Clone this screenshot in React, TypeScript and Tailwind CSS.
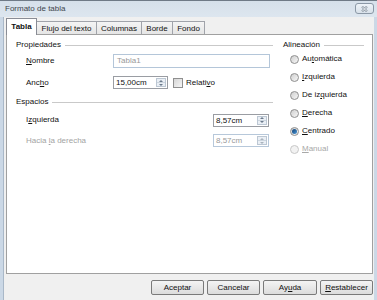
import React from "react";

const U = ({ children }: { children: React.ReactNode }) => (
  <span className="underline decoration-[0.5px] underline-offset-[1px]">{children}</span>
);

function Spin({ value, disabled, width }: { value: string; disabled?: boolean; width: string }) {
  return (
    <div
      className={`flex h-[13px] ${width} border ${
        disabled ? "border-[#b7c8da] text-[#9a9a9a]" : "border-[#9a9da3] text-[#111111]"
      } bg-white`}
    >
      <div className="flex-1 pl-[2px] leading-[11px]">{value}</div>
      <div className="m-[1px] flex w-[10px] flex-col border border-[#bcc7d3] bg-[#eaeff5]">
        <div className="flex flex-1 items-center justify-center border-b border-[#ccd5de]">
          <svg width="4" height="2" viewBox="0 0 4 2">
            <path d="M0 2 L2 0 L4 2 Z" fill={disabled ? "#a9b3bd" : "#6b7a8c"} />
          </svg>
        </div>
        <div className="flex flex-1 items-center justify-center">
          <svg width="4" height="2" viewBox="0 0 4 2">
            <path d="M0 0 L2 2 L4 0 Z" fill={disabled ? "#a9b3bd" : "#6b7a8c"} />
          </svg>
        </div>
      </div>
    </div>
  );
}

function Radio({ label, checked, disabled }: { label: React.ReactNode; checked?: boolean; disabled?: boolean }) {
  return (
    <div className="flex h-[18px] items-center pl-[7px]">
      <div
        className={`flex h-[9px] w-[9px] items-center justify-center rounded-full border ${
          disabled ? "border-[#c8c8c8] bg-[#f2f2f2]" : "border-[#8f8f8f] bg-gradient-to-br from-[#cfcfcf] to-[#f7f7f7]"
        }`}
      >
        {checked && <div className="h-[5px] w-[5px] rounded-full bg-gradient-to-br from-[#0d3f73] to-[#4d9ad9]" />}
      </div>
      <span className={`ml-[3px] ${disabled ? "text-[#a8a8a8]" : "text-[#111111]"}`}>{label}</span>
    </div>
  );
}

function Heading({ title }: { title: string }) {
  return (
    <div className="flex h-[12px] items-center">
      <span className="text-[#111111]">{title}</span>
      <div className="ml-[4px] h-[1px] flex-1 bg-[#c9c9c9]" />
    </div>
  );
}

function Btn({ children, w }: { children: React.ReactNode; w: string }) {
  return (
    <div
      className={`flex h-[15px] ${w} items-center justify-center rounded-[2px] border border-[#7a7a7a] bg-gradient-to-b from-[#f4f4f4] to-[#dcdcdc] text-[#111111]`}
    >
      {children}
    </div>
  );
}

export default function App() {
  const tabs = [
    { t: "Flujo del texto", w: "w-[60px]" },
    { t: "Columnas", w: "w-[45px]" },
    { t: "Borde", w: "w-[31px]" },
    { t: "Fondo", w: "w-[32px]" },
  ];
  return (
    <div
      className="flex h-[300px] w-[377px] flex-col overflow-hidden border-t border-[#6f7a86] bg-[#cbd8e6] text-[8px] leading-none"
      style={{ fontFamily: '"Liberation Sans", Arial, sans-serif' }}
    >
      {/* title bar */}
      <div className="flex h-[16px] items-center bg-gradient-to-b from-[#d6e0ea] to-[#dde6ef] pl-[5px] pr-[3px]">
        <span className="flex-1 text-[#40464c]">Formato de tabla</span>
        <div className="mt-[-1px] flex h-[11px] w-[19px] items-center justify-center rounded-[3px] border border-[#8b98a6] bg-gradient-to-b from-[#eef3f8] to-[#d8e1ea]">
          <svg width="7" height="6" viewBox="0 0 7 6">
            <path d="M1 0.5 L6 5.5 M6 0.5 L1 5.5" stroke="#8a96a3" strokeWidth="2.2" />
            <path d="M1 0.5 L6 5.5 M6 0.5 L1 5.5" stroke="#f7f9fb" strokeWidth="0.9" />
          </svg>
        </div>
      </div>

      {/* client */}
      <div className="mx-[3px] flex flex-1 flex-col border-l border-[#a9b8c8] bg-[#f0f0f0] px-[1px]">
        {/* tabs */}
        <div className="flex h-[18px] items-end pl-[1px]">
          <div className="relative z-10 flex h-[17px] w-[31px] items-start justify-center border-x border-t border-[#898c95] bg-white pt-[4px] font-bold text-[#111111]">
            Tabla
          </div>
          {tabs.map((x) => (
            <div
              key={x.t}
              className={`flex h-[14px] ${x.w} items-start justify-center border-r border-t border-[#a0a3aa] bg-gradient-to-b from-[#f4f4f4] to-[#e4e4e4] pt-[3px] text-[#111111]`}
            >
              {x.t}
            </div>
          ))}
        </div>

        {/* panel */}
        <div className="ml-[1px] mt-[-1px] flex h-[240px] border border-[#a0a0a0] bg-white pl-[9px] pt-[4px]">
          {/* left column */}
          <div className="flex w-[257px] flex-col">
            <Heading title="Propiedades" />
            <div className="mt-[3px] flex h-[14px] items-center">
              <span className="w-[97px] pl-[10px] text-[#111111]">
                <U>N</U>ombre
              </span>
              <div className="flex h-[14px] w-[157px] items-center border border-[#b4c6d9] pl-[3px] text-[#999999]">
                Tabla1
              </div>
            </div>
            <div className="mt-[8px] flex h-[13px] items-center">
              <span className="w-[97px] pl-[10px] text-[#111111]">
                Anc<U>h</U>o
              </span>
              <Spin value="15,00cm" width="w-[55px]" />
              <div className="ml-[5px] h-[10px] w-[10px] border border-[#8f8f8f] bg-gradient-to-br from-[#d6d6d6] to-[#f6f6f6]" />
              <span className="ml-[3px] text-[#111111]">
                Relati<U>v</U>o
              </span>
            </div>
            <div className="mt-[7px]">
              <Heading title="Espacios" />
            </div>
            <div className="mt-[6px] flex h-[12px] items-center">
              <span className="w-[197px] pl-[10px] text-[#111111]">
                I<U>z</U>quierda
              </span>
              <Spin value="8,57cm" width="w-[56px]" />
            </div>
            <div className="mt-[8px] flex h-[13px] items-center">
              <span className="w-[197px] pl-[10px] text-[#a3a3a3]">
                Hacia <U>l</U>a derecha
              </span>
              <Spin value="8,57cm" width="w-[56px]" disabled />
            </div>
          </div>

          {/* right column */}
          <div className="ml-[10px] flex w-[81px] flex-col">
            <Heading title="Alineación" />
            <div className="mt-[-1px] flex flex-col">
              <Radio label={<>Au<U>t</U>omática</>} />
              <Radio label={<><U>I</U>zquierda</>} />
              <Radio label={<>De iz<U>q</U>uierda</>} />
              <Radio label={<><U>D</U>erecha</>} />
              <Radio label={<><U>C</U>entrado</>} checked />
              <Radio label={<><U>M</U>anual</>} disabled />
            </div>
          </div>
        </div>

        {/* buttons */}
        <div className="mt-[6px] flex justify-end gap-[3px]">
          <Btn w="w-[53px]">Aceptar</Btn>
          <Btn w="w-[53px]">Cancelar</Btn>
          <Btn w="w-[54px]">
            Ay<U>u</U>da
          </Btn>
          <Btn w="w-[53px]">
            <U>R</U>establecer
          </Btn>
        </div>
      </div>
    </div>
  );
}
